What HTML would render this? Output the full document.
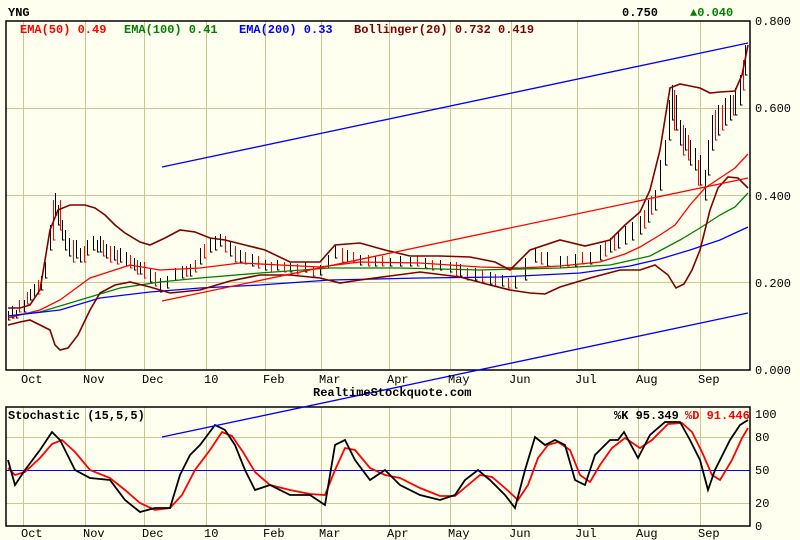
<!DOCTYPE html>
<html><head><meta charset="utf-8"><style>
html,body{margin:0;padding:0;background:#fffff0;}
svg{display:block}
text{font-family:"Liberation Mono",monospace;font-size:12px;}
.b{font-weight:bold}
</style></head><body>
<svg width="800" height="540" viewBox="0 0 800 540" xmlns="http://www.w3.org/2000/svg">
<rect width="800" height="540" fill="#fffff0"/>
<g stroke="#c8c890" stroke-width="1" shape-rendering="crispEdges">
<line x1="23.5" y1="21" x2="23.5" y2="370"/><line x1="85.5" y1="21" x2="85.5" y2="370"/><line x1="144.5" y1="21" x2="144.5" y2="370"/><line x1="206.5" y1="21" x2="206.5" y2="370"/><line x1="265.5" y1="21" x2="265.5" y2="370"/><line x1="321.5" y1="21" x2="321.5" y2="370"/><line x1="389.5" y1="21" x2="389.5" y2="370"/><line x1="450.5" y1="21" x2="450.5" y2="370"/><line x1="511.5" y1="21" x2="511.5" y2="370"/><line x1="577.5" y1="21" x2="577.5" y2="370"/><line x1="638.5" y1="21" x2="638.5" y2="370"/><line x1="700.5" y1="21" x2="700.5" y2="370"/>
<line x1="6" y1="108.5" x2="750" y2="108.5"/><line x1="6" y1="195.5" x2="750" y2="195.5"/><line x1="6" y1="282.5" x2="750" y2="282.5"/>
<line x1="23.5" y1="407" x2="23.5" y2="526"/><line x1="85.5" y1="407" x2="85.5" y2="526"/><line x1="144.5" y1="407" x2="144.5" y2="526"/><line x1="206.5" y1="407" x2="206.5" y2="526"/><line x1="265.5" y1="407" x2="265.5" y2="526"/><line x1="321.5" y1="407" x2="321.5" y2="526"/><line x1="389.5" y1="407" x2="389.5" y2="526"/><line x1="450.5" y1="407" x2="450.5" y2="526"/><line x1="511.5" y1="407" x2="511.5" y2="526"/><line x1="577.5" y1="407" x2="577.5" y2="526"/><line x1="638.5" y1="407" x2="638.5" y2="526"/><line x1="700.5" y1="407" x2="700.5" y2="526"/>
<line x1="6" y1="437.5" x2="750" y2="437.5"/><line x1="6" y1="503.5" x2="750" y2="503.5"/>
</g>
<line x1="6" y1="470.5" x2="750" y2="470.5" stroke="#0000ff" shape-rendering="crispEdges"/>
<g fill="none" stroke-width="1" shape-rendering="crispEdges">
<path stroke="#000" d="M8.5 311V320h2M30.5 289V300h2M45.5 262V278h2M55.5 193V215h2M65.5 230V250h2M80.5 248V262h2M100.5 236V252h2M120.5 248V262h2M140.5 262V274h2M160.5 278V292h2M175.5 268V280h2M190.5 264V276h2M210.5 238V252h2M220.5 234V246h2M240.5 250V262h2M265.5 260V270h2M290.5 263V272h2M320.5 265V275h2M335.5 245V258h2M360.5 255V265h2M390.5 258V266h2M410.5 257V266h2M440.5 260V270h2M460.5 264V276h2M490.5 272V284h2M515.5 276V288h2M535.5 248V262h2M560.5 256V268h2M590.5 252V264h2M610.5 238V252h2M625.5 226V244h2M640.5 216V234h2M655.5 190V210h2M665.5 140V165h2M672.5 85V120h2M690.5 140V165h2M705.5 170V200h2M712.5 115V150h2M725.5 98V125h2M735.5 88V115h2M745.5 45V75h2"/>
<path stroke="#000" d="M12.5 306V318h2M16.5 310V318h2M24.5 300V312h2M34.5 284V296h2M41.5 276V290h2M50.5 225V250h2M58.5 205V225h2M62.5 220V240h2M69.5 238V256h2M76.5 240V258h2M87.5 240V255h2M93.5 236V250h2M97.5 240V252h2M106.5 244V258h2M114.5 246V260h2M126.5 252V266h2M134.5 258V270h2M150.5 268V282h2M167.5 276V288h2M182.5 266V278h2M200.5 248V264h2M215.5 236V250h2M230.5 242V256h2M252.5 254V266h2M277.5 260V270h2M305.5 262V272h2M328.5 255V268h2M347.5 250V262h2M375.5 256V266h2M400.5 256V266h2M425.5 258V268h2M450.5 262V272h2M475.5 268V280h2M502.5 275V286h2M525.5 258V280h2M547.5 252V266h2M575.5 254V266h2M600.5 245V260h2M618.5 232V248h2M632.5 222V240h2M648.5 200V222h2M660.5 160V190h2M669.5 100V140h2M676.5 95V130h2M680.5 120V145h2M685.5 128V150h2M695.5 148V170h2M700.5 155V185h2M708.5 140V175h2M718.5 105V135h2M730.5 95V120h2M740.5 75V105h2"/>
<path stroke="#ff0000" d="M19.5 300V312h2M27.5 292V304h2M38.5 280V294h2M53.5 200V240h2M60.5 200V230h2M73.5 240V262h2M84.5 246V262h2M103.5 240V256h2M110.5 246V262h2M117.5 250V264h2M130.5 255V268h2M137.5 260V274h2M144.5 262V278h2M155.5 272V286h2M186.5 266V276h2M195.5 260V272h2M204.5 244V258h2M225.5 236V252h2M235.5 246V262h2M245.5 252V264h2M258.5 256V268h2M271.5 262V272h2M284.5 262V272h2M297.5 264V274h2M313.5 266V276h2M342.5 248V262h2M353.5 252V262h2M368.5 255V266h2M382.5 256V266h2M417.5 256V266h2M432.5 260V270h2M456.5 262V276h2M467.5 268V280h2M482.5 270V282h2M495.5 274V286h2M508.5 278V288h2M541.5 252V264h2M567.5 256V266h2M582.5 252V264h2M605.5 242V256h2M614.5 236V250h2M644.5 210V228h2M651.5 196V214h2M674.5 90V130h2M683.5 125V155h2M688.5 135V160h2M698.5 160V185h2M715.5 110V140h2M722.5 105V130h2M733.5 95V115h2M743.5 60V90h2"/>
</g>
<g fill="none" stroke-width="1.3">
<polyline stroke="#ff0000" points="8,318 40,310 60,300 90,278 130,265 160,270 200,268 240,263 280,265 320,267 360,262 420,263 480,267 520,268 560,266 600,262 625,254 640,247 660,235 675,225 690,205 705,188 720,178 735,168 748,154"/>
<polyline stroke="#008000" points="8,316 40,312 80,300 120,288 160,282 200,278 260,273 330,268 400,268 480,270 560,268 610,265 650,256 680,240 700,228 720,215 735,207 748,193"/>
<polyline stroke="#0000ff" points="8,316 60,310 100,298 150,292 200,288 260,285 330,280 420,278 500,277 580,273 630,266 660,259 690,250 720,240 748,227"/>
<polyline stroke="#800000" stroke-width="1.6" points="8,308 20,308 30,305 40,290 50,230 58,210 70,205 85,205 95,208 105,215 115,225 125,233 140,242 150,245 165,238 180,230 195,232 210,238 225,240 245,245 265,250 290,262 320,262 335,245 360,243 385,250 410,256 440,256 470,257 495,262 510,270 530,250 560,240 585,246 610,240 625,225 640,212 650,190 660,150 670,88 680,84 690,86 700,88 710,93 720,92 735,91 742,75 748,45"/>
<polyline stroke="#800000" stroke-width="1.6" points="8,325 20,322 30,320 40,325 50,330 55,345 60,350 68,348 78,335 90,310 100,293 115,285 130,282 150,287 170,293 200,290 230,281 260,275 290,275 320,278 340,283 360,280 390,276 420,272 460,277 490,285 510,290 530,293 545,294 560,287 590,278 620,270 640,270 655,265 668,275 676,288 684,284 692,270 700,250 710,210 718,188 728,177 738,178 748,188"/>
<line x1="162" y1="301" x2="748" y2="178" stroke="#ff0000"/>
<line x1="162" y1="167" x2="748" y2="43" stroke="#0000ff"/>
</g>
<g fill="none" stroke-width="1.8">
<polyline stroke="#ff0000" points="8,468 15,475 25,472 40,458 52,444 62,440 75,452 90,470 110,478 125,490 140,503 155,510 170,508 182,495 195,470 210,450 222,432 232,436 243,452 255,472 270,485 290,490 310,494 325,495 335,470 345,448 355,450 370,468 385,475 400,478 420,488 440,496 455,496 468,485 480,475 492,477 505,488 518,500 528,485 538,458 548,445 558,442 570,450 580,475 590,482 600,465 612,448 625,438 640,448 652,440 668,424 682,423 692,432 702,452 712,475 720,480 732,460 742,438 748,428"/>
<polyline stroke="#000000" points="8,460 15,485 25,470 40,450 52,432 60,440 75,470 90,478 110,480 125,500 140,512 155,508 170,508 180,475 190,455 200,445 215,425 225,430 235,445 245,470 255,490 270,485 290,495 310,495 325,505 335,445 345,440 355,460 370,480 385,470 400,485 420,495 440,500 455,495 465,480 478,470 490,480 505,495 515,508 525,470 535,437 545,445 555,440 565,445 575,480 585,485 595,455 610,440 618,440 624,432 638,458 650,435 665,422 680,422 690,440 700,460 708,490 715,470 730,440 740,425 748,420"/>
</g>
<rect x="6" y="21" width="744" height="349" fill="none" stroke="#000" stroke-width="1.5"/>
<rect x="6" y="407" width="744" height="119" fill="none" stroke="#000" stroke-width="1.5"/>
<line x1="162" y1="437" x2="748" y2="313" stroke="#0000ff" stroke-width="1.3"/>
<text x="8" y="16" class="b">YNG</text>
<text x="622" y="16" class="b">0.750</text>
<text x="690" y="16" class="b" fill="#008000">▲0.040</text>
<text x="20" y="33" class="b" fill="#ff0000">EMA(50) 0.49</text>
<text x="124" y="33" class="b" fill="#008000">EMA(100) 0.41</text>
<text x="239" y="33" class="b" fill="#0000ff">EMA(200) 0.33</text>
<text x="354" y="33" class="b" fill="#800000">Bollinger(20) 0.732 0.419</text>
<g font-size="11">
<text x="755" y="25">0.800</text><text x="755" y="112">0.600</text><text x="755" y="200">0.400</text><text x="755" y="287">0.200</text><text x="755" y="374">0.000</text>
<text x="755" y="418">100</text><text x="755" y="441">80</text><text x="755" y="474">50</text><text x="755" y="507">20</text><text x="755" y="530">0</text>
</g>
<g font-size="11">
<text x="21" y="383">Oct</text><text x="83" y="383">Nov</text><text x="142" y="383">Dec</text><text x="204" y="383">10</text><text x="263" y="383">Feb</text><text x="319" y="383">Mar</text><text x="387" y="383">Apr</text><text x="448" y="383">May</text><text x="509" y="383">Jun</text><text x="575" y="383">Jul</text><text x="636" y="383">Aug</text><text x="698" y="383">Sep</text>
<text x="21" y="537">Oct</text><text x="83" y="537">Nov</text><text x="142" y="537">Dec</text><text x="204" y="537">10</text><text x="263" y="537">Feb</text><text x="319" y="537">Mar</text><text x="387" y="537">Apr</text><text x="448" y="537">May</text><text x="509" y="537">Jun</text><text x="575" y="537">Jul</text><text x="636" y="537">Aug</text><text x="698" y="537">Sep</text>
</g>
<text x="313" y="396" class="b">RealtimeStockquote.com</text>
<text x="8" y="419" class="b">Stochastic (15,5,5)</text>
<text x="614" y="419" class="b">%K 95.349</text>
<text x="685" y="419" class="b" fill="#ff0000">%D 91.446</text>
</svg>
</body></html>
